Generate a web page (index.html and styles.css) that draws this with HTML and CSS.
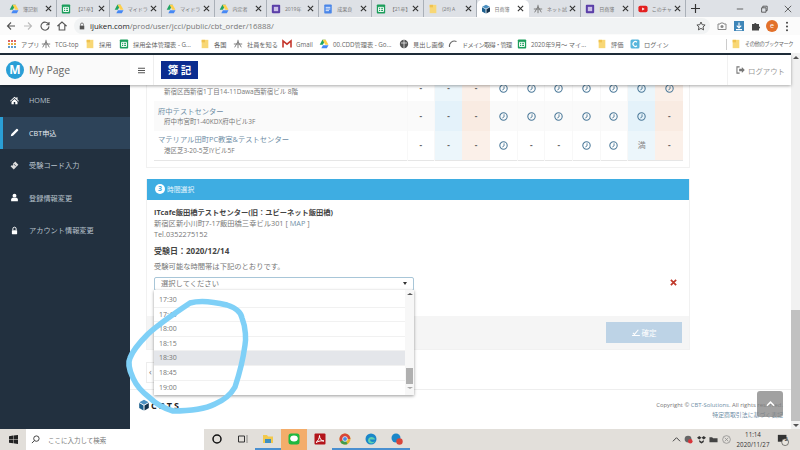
FILE: index.html
```html
<!DOCTYPE html>
<html lang="ja">
<head>
<meta charset="utf-8">
<title>My Page</title>
<link rel="stylesheet" href="styles.css">
</head>
<body>
<svg class="defs" xmlns="http://www.w3.org/2000/svg">
  <symbol id="drive" viewBox="0 0 12 12"><path d="M4 1h4L4.6 7H.8z" fill="#1fa463"/><path d="M8 1l3.4 6H7.6L4.2 1z" fill="#ffd04b"/><path d="M2.8 11l1.9-3.6h6.7L9.4 11z" fill="#4688f4"/></symbol>
  <symbol id="sheet" viewBox="0 0 12 12"><rect x="1" y="0.5" width="10" height="11" rx="1" fill="#1c9e5c"/><path d="M3 4h6v5H3zM5.6 4v5M3 6.4h6" fill="none" stroke="#fff" stroke-width="1.1"/></symbol>
  <symbol id="forms" viewBox="0 0 12 12"><rect x="1" y="1" width="10" height="10" rx="1" fill="#5b3fa8"/><rect x="3.4" y="3.4" width="5.2" height="5.2" fill="#cbbfe8"/></symbol>
  <symbol id="docs" viewBox="0 0 12 12"><rect x="1.5" y="0.5" width="9" height="11" rx="1" fill="#4a86e8"/><path d="M3.2 4h5.6M3.2 6h5.6M3.2 8h4" stroke="#fff" stroke-width="1"/></symbol>
  <symbol id="folder" viewBox="0 0 12 12"><path d="M2 1h8v10H2z" fill="#f8d775"/><path d="M2 1h4v3H2z" fill="#f0c24f"/></symbol>
  <symbol id="cube" viewBox="0 0 12 12"><path d="M6 .8l4.6 2.5L6 5.8 1.4 3.3z" fill="#4b8fc0"/><path d="M1.2 4l4.3 2.4v5L1.2 9z" fill="#1c5f8e"/><path d="M10.8 4L6.5 6.4v5L10.8 9z" fill="#13324d"/></symbol>
  <symbol id="net" viewBox="0 0 12 12"><path d="M2 10L6 3l4 7M1 6h10M6 1v10" fill="none" stroke="#777" stroke-width="1.1"/></symbol>
  <symbol id="yt" viewBox="0 0 12 12"><rect x="0.5" y="2" width="11" height="8" rx="2.2" fill="#e32020"/><path d="M5 4.2L8 6 5 7.8z" fill="#fff"/></symbol>
  <symbol id="clock" viewBox="0 0 10 10"><circle cx="5" cy="5" r="4.1" fill="none" stroke="#4d7a9a" stroke-width="1.2"/><path d="M5.6 2.6v2.9L3.7 6.6" fill="none" stroke="#4d7a9a" stroke-width="1"/></symbol>
  <symbol id="close" viewBox="0 0 8 8"><path d="M1 1l6 6M7 1L1 7" stroke="#333" stroke-width="1.3" fill="none"/></symbol>
</svg>

<div class="tabs">
  <div class="tab"><svg class="fav"><use href="#drive"/></svg><span class="tab-t">簿記新</span><svg class="tab-x"><use href="#close"/></svg></div>
  <div class="tab"><svg class="fav"><use href="#sheet"/></svg><span class="tab-t">【21卒】</span><svg class="tab-x"><use href="#close"/></svg></div>
  <div class="tab"><svg class="fav"><use href="#drive"/></svg><span class="tab-t">マイドラ</span><svg class="tab-x"><use href="#close"/></svg></div>
  <div class="tab"><svg class="fav"><use href="#drive"/></svg><span class="tab-t">マイドラ</span><svg class="tab-x"><use href="#close"/></svg></div>
  <div class="tab"><svg class="fav"><use href="#drive"/></svg><span class="tab-t">内定者</span><svg class="tab-x"><use href="#close"/></svg></div>
  <div class="tab"><svg class="fav"><use href="#forms"/></svg><span class="tab-t">2019年</span><svg class="tab-x"><use href="#close"/></svg></div>
  <div class="tab"><svg class="fav"><use href="#docs"/></svg><span class="tab-t">成果良</span><svg class="tab-x"><use href="#close"/></svg></div>
  <div class="tab"><svg class="fav"><use href="#sheet"/></svg><span class="tab-t">【21卒】</span><svg class="tab-x"><use href="#close"/></svg></div>
  <div class="tab"><svg class="fav"><use href="#folder"/></svg><span class="tab-t">(26) A</span><svg class="tab-x"><use href="#close"/></svg></div>
  <div class="tab tab-active"><svg class="fav"><use href="#cube"/></svg><span class="tab-t">日商簿</span><svg class="tab-x"><use href="#close"/></svg></div>
  <div class="tab"><svg class="fav"><use href="#net"/></svg><span class="tab-t">ネット試</span><svg class="tab-x"><use href="#close"/></svg></div>
  <div class="tab"><svg class="fav"><use href="#forms"/></svg><span class="tab-t">日商簿</span><svg class="tab-x"><use href="#close"/></svg></div>
  <div class="tab"><svg class="fav"><use href="#yt"/></svg><span class="tab-t">このチャ</span><svg class="tab-x"><use href="#close"/></svg></div>
  <svg class="tab-plus" viewBox="0 0 10 10"><path d="M5 0v10M0 5h10" stroke="#333" stroke-width="1.3"/></svg>
  <div class="win">
    <svg class="win-i" viewBox="0 0 10 10"><path d="M1 5h8" stroke="#444"/></svg>
    <svg class="win-i" viewBox="0 0 10 10"><path d="M2 3.5h5.5V9H2zM3.5 3.5V1.5H9V7H7.5" fill="none" stroke="#444"/></svg>
    <svg class="win-i" viewBox="0 0 10 10"><path d="M1 1l8 8M9 1L1 9" stroke="#444"/></svg>
  </div>
</div>

<div class="toolbar">
  <svg class="tb-i" viewBox="0 0 10 10"><path d="M9 5H1.500M5 1.500L1.500 5 5 8.500" fill="none" stroke="#555" stroke-width="1.1"/></svg>
  <svg class="tb-i" viewBox="0 0 10 10"><path d="M1 5h7.500M5 1.500L8.500 5 5 8.500" fill="none" stroke="#bbb" stroke-width="1.1"/></svg>
  <svg class="tb-i" viewBox="0 0 10 10"><path d="M8.600 3.400A4 4 0 1 0 9 5.400M9 1v2.800H6.200" fill="none" stroke="#555" stroke-width="1.1"/></svg>
  <svg class="tb-i" viewBox="0 0 10 10"><path d="M5 1L1 4.600h1.200V9h5.600V4.600H9z" fill="none" stroke="#555" stroke-width="1.1"/></svg>
  <div class="omni">
    <svg class="lock" viewBox="0 0 8 10"><path d="M2 4.500V3a2 2 0 0 1 4 0v1.500" fill="none" stroke="#555"/><rect x="1" y="4.500" width="6" height="5" fill="#555"/></svg>
    <span class="url"><b>ijuken.com</b>/prod/user/jcci/public/cbt_order/16888/</span>
    <svg class="star" viewBox="0 0 10 10"><path d="M5 1l1.200 2.700 2.900.3L7 6l.6 2.900L5 7.400 2.400 8.900 3 6 .9 4l2.900-.3z" fill="none" stroke="#555"/></svg>
  </div>
  <svg class="ext" viewBox="0 0 10 10"><path d="M1 3h2l.7-1h2.600L7 3h2v5.500H1z" fill="none" stroke="#888"/><circle cx="5" cy="5.600" r="1.500" fill="#888"/></svg>
  <svg class="ext" viewBox="0 0 10 10"><rect width="10" height="10" fill="#3f86b8"/><path d="M5 1.500v5M2.800 4.600L5 7l2.200-2.400M2 8.600h6" fill="none" stroke="#fff" stroke-width="1.1"/></svg>
  <svg class="ext" viewBox="0 0 10 10"><path d="M1 3h2.200a1.100 1.100 0 1 1 2.200 0H8v2.400a1.100 1.100 0 1 1 0 2.200V9.500H1z" fill="#444"/></svg>
  <span class="avatar">ｅ</span>
  <svg class="ext ext-kebab" viewBox="0 0 4 12"><circle cx="2" cy="2" r="1.100" fill="#444"/><circle cx="2" cy="6" r="1.100" fill="#444"/><circle cx="2" cy="10" r="1.100" fill="#444"/></svg>
</div>

<div class="bookmarks">
  <span class="bm bm-apps"><svg class="fav" viewBox="0 0 9 9"><path d="M1 1h1.600v1.600H1zM3.700 1h1.600v1.600H3.700zM6.400 1H8v1.600H6.400z" fill="#d9534f"/><path d="M1 3.700h1.600v1.600H1zM3.700 3.700h1.600v1.600H3.700zM6.400 3.700H8v1.600H6.400z" fill="#e0a030"/><path d="M1 6.400h1.600V8H1zM3.700 6.400h1.600V8H3.700zM6.400 6.400H8V8H6.400z" fill="#4a90c8"/></svg>アプリ</span>
  <span class="bm bm-tcg"><svg class="fav"><use href="#net"/></svg>TCG-top</span>
  <span class="bm bm-hire"><svg class="fav"><use href="#folder"/></svg>採用</span>
  <span class="bm bm-hire2"><svg class="fav"><use href="#sheet"/></svg>採用全体管理表 - G...</span>
  <span class="bm bm-country"><svg class="fav"><use href="#folder"/></svg>各国</span>
  <span class="bm bm-staff"><svg class="fav"><use href="#net"/></svg>社員を知る</span>
  <span class="bm bm-gmail"><svg class="fav" viewBox="0 0 10 10"><path d="M1 8.500V2l4 3.200L9 2v6.500" fill="none" stroke="#c5362c" stroke-width="1.600"/></svg>Gmail</span>
  <span class="bm bm-cdd"><svg class="fav"><use href="#drive"/></svg>00.CDD管理表 - Go...</span>
  <span class="bm bm-img"><svg class="fav" viewBox="0 0 10 10"><circle cx="5" cy="5" r="4.200" fill="#555"/><path d="M2 4h6M5 1v8" stroke="#fff" stroke-width=".7"/></svg>見出し画像</span>
  <span class="bm bm-domain"><svg class="fav" viewBox="0 0 10 10"><path d="M1.500 8A5 5 0 0 1 8.500 2.500" fill="none" stroke="#666" stroke-width="1.100"/></svg>ドメイン取得・管理</span>
  <span class="bm bm-sep"><svg class="fav"><use href="#sheet"/></svg>2020年9月～ マイ...</span>
  <span class="bm bm-eval"><svg class="fav"><use href="#folder"/></svg>評価</span>
  <span class="bm bm-login"><svg class="fav" viewBox="0 0 10 10"><rect x=".5" y=".5" width="9" height="9" rx="1.500" fill="#58b6dc"/><path d="M7 3.200A2.400 2.400 0 1 0 7 6.800" fill="none" stroke="#fff" stroke-width="1.200"/></svg>ログイン</span>
  <span class="bm-divider"></span>
  <span class="bm bm-other"><svg class="fav"><use href="#folder"/></svg>その他のブックマーク</span>
</div>

<div class="viewport">
  <div class="page">
    <header class="topbar">
      <div class="brand">
        <span class="brand-mark">M</span>
        <span class="brand-name">My Page</span>
      </div>
      <div class="toggle">
        <svg class="toggle-i" viewBox="0 0 8 7"><path d="M0 1h8M0 3.500h8M0 6h8" stroke="#555" stroke-width="1.200"/></svg>
      </div>
      <div class="logo-wrap"><span class="logo">簿 記</span></div>
      <a class="logout">
        <svg class="logout-i" viewBox="0 0 10 9"><path d="M4 1H1v7h3" fill="none" stroke="#777" stroke-width="1.200"/><path d="M3.500 3.200h3V1l3.300 3.500L6.500 8V5.800h-3z" fill="#777"/></svg>ログアウト
      </a>
    </header>
    <div class="body">
      <nav class="sidebar">
        <a class="nav-item">
          <svg class="nav-i" viewBox="0 0 12 12"><path d="M6 1L0 6.500l.8.800L6 2.700l5.200 4.600.8-.8-2-1.800V1.500H8.500v1.600zM2 7.500V11h3V8h2v3h3V7.500L6 4z" fill="#fff"/></svg>
          <span>HOME</span>
        </a>
        <a class="nav-item nav-active">
          <svg class="nav-i" viewBox="0 0 12 12"><path d="M1 11l.8-3L8.500 1.300a1 1 0 0 1 1.400 0l.8.800a1 1 0 0 1 0 1.400L4 10.200z" fill="#fff"/></svg>
          <span>CBT申込</span>
        </a>
        <a class="nav-item">
          <svg class="nav-i" viewBox="0 0 12 12"><path d="M7 .8l4.200 4.200L5 11.200.8 7l1.200-1.200a1.200 1.200 0 0 0 1.700-1.700z" fill="#ddd"/><path d="M5 4l3 3" stroke="#22303f"/></svg>
          <span>受験コード入力</span>
        </a>
        <a class="nav-item">
          <svg class="nav-i" viewBox="0 0 12 12"><circle cx="6" cy="3.500" r="2.600" fill="#fff"/><path d="M1.500 11V8.500C1.500 7 3 6.300 4 6.300h4c1 0 2.500.7 2.500 2.200V11z" fill="#fff"/></svg>
          <span>登録情報変更</span>
        </a>
        <a class="nav-item">
          <svg class="nav-i" viewBox="0 0 12 12"><path d="M3.800 5.500V3.800a2.200 2.200 0 0 1 4.400 0v1.700" fill="none" stroke="#fff" stroke-width="1.300"/><rect x="2.500" y="5.500" width="7" height="5.500" rx=".6" fill="#fff"/></svg>
          <span>アカウント情報変更</span>
        </a>
      </nav>
      <main class="main">
        <div class="scroll">
          <section class="card">
            <table class="venues">
              <tr class="first">
                <td class="venue"><div class="addr">新宿区西新宿1丁目14-11Dawa西新宿ビル 8階</div></td>
                <td>-</td><td class="c-blue">-</td><td class="c-orange">-</td>
                <td><svg class="ck"><use href="#clock"/></svg></td><td><svg class="ck"><use href="#clock"/></svg></td><td><svg class="ck"><use href="#clock"/></svg></td><td><svg class="ck"><use href="#clock"/></svg></td><td><svg class="ck"><use href="#clock"/></svg></td>
                <td class="c-blue"><svg class="ck"><use href="#clock"/></svg></td><td class="c-orange"><svg class="ck"><use href="#clock"/></svg></td>
              </tr>
              <tr class="alt">
                <td class="venue"><a class="vname">府中テストセンター</a><div class="addr">府中市宮町1-40KDX府中ビル3F</div></td>
                <td>-</td><td class="c-blue">-</td><td class="c-orange">-</td>
                <td><svg class="ck"><use href="#clock"/></svg></td><td><svg class="ck"><use href="#clock"/></svg></td><td><svg class="ck"><use href="#clock"/></svg></td><td><svg class="ck"><use href="#clock"/></svg></td><td><svg class="ck"><use href="#clock"/></svg></td>
                <td class="c-blue"><svg class="ck"><use href="#clock"/></svg></td><td class="c-orange">-</td>
              </tr>
              <tr class="last">
                <td class="venue"><a class="vname">マテリアル田町PC教室&amp;テストセンター</a><div class="addr">港区芝3-20-5芝IYビル5F</div></td>
                <td>-</td><td class="c-blue">-</td><td class="c-orange">-</td>
                <td><svg class="ck"><use href="#clock"/></svg></td><td>-</td><td>-</td><td><svg class="ck"><use href="#clock"/></svg></td><td><svg class="ck"><use href="#clock"/></svg></td>
                <td class="c-blue full">満</td><td class="c-orange">-</td>
              </tr>
            </table>
          </section>

          <section class="panel">
            <h2 class="panel-head"><span class="step">3</span>時間選択</h2>
            <div class="panel-body">
              <p class="p-name">ITcafe飯田橋テストセンター(旧：ユビーネット飯田橋)</p>
              <p class="p-line">新宿区新小川町7-17飯田橋三幸ビル301 [ <a class="map">MAP</a> ]</p>
              <p class="p-line">Tel.0352275152</p>
              <p class="p-date">受験日：2020/12/14</p>
              <p class="p-note">受験可能な時間帯は下記のとおりです。</p>
              <div class="select-row">
                <div class="select">
                  <span>選択してください</span><i class="caret"></i>
                  <div class="dropdown">
                    <ul class="options">
                      <li>17:30</li><li>17:45</li><li>18:00</li><li>18:15</li><li class="hover">18:30</li><li>18:45</li><li>19:00</li>
                    </ul>
                    <div class="dd-scroll"><i class="up"></i><b></b><i class="down"></i></div>
                  </div>
                </div>
                <svg class="remove" viewBox="0 0 8 8"><path d="M1 1l6 6M7 1L1 7" stroke="#c0392b" stroke-width="2"/></svg>
              </div>
            </div>
            <div class="panel-foot">
              <a class="confirm"><svg class="confirm-i" viewBox="0 0 10 9"><path d="M1 5l2 2 5-6M0 8.500h10" fill="none" stroke="#fff" stroke-width="1.300"/></svg>確定</a>
            </div>
          </section>

          <div class="pager"><a class="prev">‹</a></div>
        </div>

        <footer class="foot">
          <div class="foot-logo">
            <svg class="foot-cube"><use href="#cube"/></svg><span>CBTS</span>
          </div>
          <div class="foot-text">
            <div>Copyright © <a class="foot-link">CBT-Solutions</a>. All rights reserved.</div>
            <div><a class="foot-link">特定商取引法に基づく表記</a></div>
          </div>
          <a class="to-top"><svg class="to-top-i" viewBox="0 0 10 6"><path d="M1 5l4-4 4 4" fill="none" stroke="#fff" stroke-width="1.800"/></svg></a>
        </footer>
      </main>
    </div>
  </div>
  <div class="scrollbar"><i class="up"></i><b></b><i class="down"></i></div>
</div>

<div class="taskbar">
  <div class="start"><svg class="start-i" viewBox="0 0 10 10"><path d="M0 1.300l4.500-.7v4H0zM5 .5L10 0v4.600H5zM0 5.200h4.500v4L0 8.600zM5 5.200h5V10l-5-.7z" fill="#222"/></svg></div>
  <div class="search"><svg class="search-i" viewBox="0 0 10 10"><circle cx="6" cy="4" r="3" fill="none" stroke="#333"/><path d="M3.800 6.200L1 9" stroke="#333"/></svg>ここに入力して検索</div>
  <div class="ti"><svg class="ti-i" viewBox="0 0 12 12"><circle cx="6" cy="6" r="4" fill="none" stroke="#111" stroke-width="1.500"/></svg></div>
  <div class="ti"><svg class="ti-i" viewBox="0 0 12 12"><path d="M1.500 3h6v6h-6zM9.500 3h1M9.500 5h1M9.500 7h1M9.500 9h1" fill="none" stroke="#333"/></svg></div>
  <div class="ti ti-run"><svg class="ti-i" viewBox="0 0 12 12"><path d="M1 2h4l1 1.500h5V10H1z" fill="#f2c94c"/><path d="M3 6h6v4H3z" fill="#3f8fc0"/></svg></div>
  <div class="ti ti-line"><svg class="ti-i" viewBox="0 0 12 12"><rect x=".5" y=".5" width="11" height="11" rx="2.500" fill="#1fb83f"/><ellipse cx="6" cy="5.500" rx="3.800" ry="3" fill="#fff"/></svg></div>
  <div class="ti"><svg class="ti-i" viewBox="0 0 12 12"><rect x=".5" y=".5" width="11" height="11" rx="1" fill="#b3151a"/><path d="M2 9.500C4 8 5.500 5 5.500 2.500 5.500 6 7.500 8 10 8 7.500 7.500 4.500 8 2 9.500z" fill="none" stroke="#fff"/></svg></div>
  <div class="ti ti-run"><svg class="ti-i" viewBox="0 0 12 12"><circle cx="6" cy="6" r="5.500" fill="#e5b52d"/><path d="M6 .5A5.500 5.500 0 0 0 1.200 8.700L6 6h5.400A5.500 5.500 0 0 0 6 .5z" fill="#d8453a"/><path d="M1.200 8.700A5.500 5.500 0 0 0 8.500 11L6 6z" fill="#3f9c4c"/><circle cx="6" cy="6" r="2.400" fill="#4a8ae0" stroke="#fff" stroke-width=".7"/></svg></div>
  <div class="ti ti-run"><svg class="ti-i" viewBox="0 0 12 12"><circle cx="6" cy="6" r="5.500" fill="#1b87c9"/><path d="M3 7.500C3 5 5 4 6.500 4S10 5 10 6.500H5C5 9 8 9.500 10 8.500 8 11.500 3 11 3 7.500z" fill="#5fd0b0"/></svg></div>
  <div class="ti ti-run"><svg class="ti-i" viewBox="0 0 12 12"><circle cx="5" cy="5" r="4.500" fill="#1b87c9"/><circle cx="8.500" cy="8.500" r="3.200" fill="#d8453a"/></svg></div>
  <div class="tray">
    <svg class="tr-i" viewBox="0 0 10 10"><path d="M1 7l4-4 4 4" fill="none" stroke="#333"/></svg>
    <svg class="tr-i" viewBox="0 0 10 10"><circle cx="4.500" cy="4.500" r="3.800" fill="#666"/><circle cx="7" cy="7" r="2.500" fill="#d8353a"/></svg>
    <svg class="tr-i" viewBox="0 0 10 10"><path d="M2.500 1l2.500 2-2.500 2L0 3zM7.500 1L10 3 7.500 5 5 3zM2.500 5.500L5 7.500l2.500-2v2.200L5 9.500 2.500 7.700z" fill="#333"/></svg>
    <svg class="tr-i" viewBox="0 0 10 10"><path d="M.5 2.500h3l1 1h5V8H.5z" fill="#444"/></svg>
    <svg class="tr-i" viewBox="0 0 10 10"><circle cx="5" cy="5" r="4.300" fill="none" stroke="#888" stroke-width=".8"/><path d="M3 3l4 4M7 3L3 7" stroke="#888" stroke-width=".8"/></svg>
    <div class="clock"><div>11:14</div><div>2020/11/27</div></div>
    <svg class="tr-note" viewBox="0 0 14 14"><path d="M1 1h10v8H1z" fill="#333"/><circle cx="9.500" cy="9.500" r="4" fill="#e8e5df" stroke="#333" stroke-width=".7"/></svg>
    <span class="tr-badge">2</span>
  </div>
</div>

<svg class="marker" viewBox="0 0 800 450">
  <path d="M190 303C200 300 215 302 227 305C236 308 241 312 242 318C246 328 246 340 245 345C243 360 239 375 235 387C230 396 222 401 215 404C205 409 190 411 173 411C163 408 155 403 150 398C142 392 136 385 133 378C129 370 128 362 130 358C133 350 140 342 148 334C160 323 175 313 190 303Z" fill="none" stroke="#7fd0f7" stroke-width="5.500" stroke-linejoin="round"/>
</svg>
</body>
</html>
```
FILE: styles.css
```css
* { box-sizing: border-box; }
html, body { margin: 0; padding: 0; }
body {
  position: relative;
  width: 800px;
  height: 450px;
  overflow: hidden;
  display: flex;
  flex-direction: column;
  font-family: "Open Sans", "Noto Sans CJK JP", sans-serif;
  font-size: 7.3px;
  color: #666;
  background: #fff;
}
.defs { display: none; }
p { margin: 0; }
ul { margin: 0; padding: 0; list-style: none; }
i { display: block; }
.fav { width: 10px; height: 10px; flex: none; }

/* browser tabs */
.tabs {
  height: 17px;
  flex: none;
  display: flex;
  align-items: center;
  padding-left: 5px;
  background: #dee1e6;
}
.tab {
  flex: 0 0 52.4px;
  min-width: 0;
  height: 17px;
  display: flex;
  align-items: center;
  gap: 4px;
  padding: 0 4px 0 4px;
  border-right: 1px solid #aab0b8;
}
.tab-active { background: #fff; border-radius: 5px 5px 0 0; border-right-color: transparent; }
.tab-t { flex: 1; min-width: 0; white-space: nowrap; font-size: 5px; color: #777; }
.tab-x { width: 7px; height: 7px; flex: none; }
.tab-plus { width: 9px; height: 9px; margin-left: 5px; flex: none; }
.win { margin-left: auto; display: flex; gap: 16px; padding-right: 8px; }
.win-i { width: 8px; height: 8px; }

/* toolbar */
.toolbar {
  height: 18px;
  flex: none;
  display: flex;
  align-items: center;
  padding-left: 6px;
  gap: 7px;
  background: #fbfbfb;
}
.tb-i { width: 10px; height: 10px; flex: none; }
.omni {
  width: 636px;
  height: 16px;
  display: flex;
  align-items: center;
  padding: 0 4px 0 5px;
  border-radius: 8px;
  background: #f1f3f4;
}
.lock { width: 6px; height: 8px; margin-right: 5px; flex: none; }
.url { font-size: 7.8px; color: #777; white-space: nowrap; }
.url b { font-weight: 400; color: #222; }
.star { width: 10px; height: 10px; margin-left: auto; }
.ext { width: 10px; height: 10px; flex: none; }
.ext-kebab { width: 4px; height: 11px; }
.avatar {
  width: 12px; height: 12px; flex: none;
  margin-left: -2px; border-radius: 50%;
  background: #e2702a; color: #fff;
  font-size: 6px; line-height: 12px; text-align: center;
}

/* bookmarks */
.bookmarks {
  height: 18px;
  flex: none;
  display: flex;
  align-items: center;
  padding-left: 7px;
  background: #fff;
  font-size: 6.2px;
  color: #666;
  white-space: nowrap;
}
.bm { display: flex; align-items: center; gap: 4px; flex: none; }
.bm-apps { width: 34px; }
.bm-tcg { width: 44px; }
.bm-hire { width: 34px; }
.bm-hire2 { width: 81px; }
.bm-country { width: 33px; }
.bm-staff { width: 49px; }
.bm-gmail { width: 37px; }
.bm-cdd { width: 80px; }
.bm-img { width: 49px; }
.bm-domain { width: 69px; letter-spacing: -.7px; }
.bm-sep { width: 80px; }
.bm-eval { width: 33px; }
.bm-login { width: 96px; }
.bm-other { font-size: 5.3px; letter-spacing: -.5px; }
.bm-divider { width: 1px; height: 11px; margin-right: 4px; background: #ccc; flex: none; }

/* viewport */
.viewport { flex: none; height: 376px; display: flex; }
.page { flex: 1; min-width: 0; display: flex; flex-direction: column; border-top: 2px solid #1f2d3a; }
.scrollbar {
  width: 9px;
  flex: none;
  display: flex;
  flex-direction: column;
  align-items: center;
  background: #f1f1f1;
}
.scrollbar b { width: 9px; height: 111px; margin-top: 251px; background: #c1c1c1; flex: none; }
.up, .down { width: 0; height: 0; flex: none; border-left: 3px solid transparent; border-right: 3px solid transparent; }
.up { border-bottom: 3px solid #555; }
.down { border-top: 3px solid #555; }
.scrollbar .up, .scrollbar .down { margin-top: 3px; }

/* topbar */
.topbar {
  position: relative;
  z-index: 3;
  height: 30px;
  flex: none;
  display: flex;
  align-items: center;
  background: #fff;
  box-shadow: 0 1px 3px rgba(0, 0, 0, .35);
}
.brand { width: 130px; height: 30px; display: flex; align-items: center; gap: 5px; padding-left: 6px; background: #fafafa; }
.brand-mark {
  width: 18px; height: 18px; border-radius: 50%;
  background: #2a9fd6; color: #fff;
  font-size: 12px; font-weight: 700; line-height: 18px; text-align: center;
}
.brand-name { font-size: 10.5px; color: #666; }
.toggle { width: 24px; height: 30px; display: flex; align-items: center; justify-content: center; border-right: 1px solid #eee; }
.toggle-i { width: 7px; height: 7px; }
.logo-wrap { padding-left: 7px; }
.logo {
  display: block;
  width: 37px; height: 18px;
  background: #0b2c8f;
  color: #fff;
  font-size: 10.5px; font-weight: 700; line-height: 18px; text-align: center;
}
.logout {
  margin-left: auto;
  width: 64px;
  height: 30px;
  padding-left: 8px;
  display: flex; align-items: center; gap: 3px;
  border-left: 1px solid #f1f1f1;
  font-size: 7.4px; color: #999;
  white-space: nowrap;
}
.logout-i { width: 9px; height: 8px; flex: none; }

/* sidebar */
.body { flex: 1; min-height: 0; display: flex; }
.sidebar { width: 130px; flex: none; background: #22303f; }
.nav-item {
  height: 32.5px;
  display: flex; align-items: center;
  padding-left: 10px;
  gap: 10px;
  font-size: 7.2px;
  color: #b8c2cc;
}
.nav-item:first-child { margin-top: -1px; }
.nav-active {
  background: #2d4359;
  color: #e8edf2;
  border-left: 3px solid #2a9fd6;
  padding-left: 7px;
}
.nav-i { width: 9px; height: 9px; flex: none; }

/* main */
.main { position: relative; flex: 1; min-width: 0; display: flex; flex-direction: column; background: #fff; overflow: hidden; }
.scroll { position: relative; z-index: 1; flex: 1; min-height: 0; padding: 0 101px 0 16px; }
.card { margin-top: -14px; padding: 0 7px 6px; background: #fff; border: 1px solid #f1f1f1; }
.venues {
  width: 529px;
  table-layout: fixed;
  border-collapse: collapse;
  margin-top: -1px;
  border-bottom: 1px solid #e6e6e6;
}
.venues td {
  width: 27.6px;
  height: 30px;
  padding: 0;
  text-align: center;
  vertical-align: middle;
  font-size: 8px;
  font-weight: 700;
  line-height: 1;
  color: #666;
  border-right: 1px solid #f8f8f8;
}
.venues .first td { padding-top: 4px; }
.venues .venue, .venues .first .venue { width: 253px; font-weight: 400; text-align: left; vertical-align: bottom; padding: 0 0 5px 4px; }
.venues .last td { height: 29px; }
.alt td { background: #fafafa; }
.venues .c-blue { background: #ecf6fb; border-right: 0; }
.venues .c-orange { background: #fbf0e9; border-right: 0; }
.alt td.c-blue { background: #e4f2fa; }
.alt td.c-orange { background: #f9ebe2; }
.vname { display: block; font-size: 7.3px; line-height: 10px; color: #6f8ea6; white-space: nowrap; }
.addr { margin-top: 1.5px; padding-left: 6px; font-size: 6.5px; line-height: 9px; color: #777; white-space: nowrap; }
.ck { width: 9px; height: 9px; display: block; margin: 0 auto; }
.venues .full { color: #888; font-weight: 400; }

/* panel */
.panel { margin-top: 11px; border: 1px solid #f1f1f1; border-top: 0; background: #fff; }
.panel-head {
  height: 21px;
  margin: 0;
  display: flex; align-items: center;
  gap: 2px;
  padding-left: 8px;
  background: #3eade2;
  color: #e8f5fc;
  font-size: 6.8px;
  font-weight: 400;
}
.step {
  width: 10px; height: 10px; border-radius: 50%;
  background: #fff; color: #3eade2;
  font-size: 7px; font-weight: 700; line-height: 10px; text-align: center;
}
.panel-body { height: 116px; padding: 7px 7px 0; line-height: 11px; color: #666; }
.p-name { font-weight: 700; color: #444; font-size: 7.25px; }
.p-line { color: #777; }
.map { color: #6f8ea6; }
.p-date { margin-top: 5px; font-size: 8px; font-weight: 700; color: #444; }
.p-note { margin-top: 5px; color: #777; }
.select-row { margin-top: 5px; display: flex; align-items: flex-start; justify-content: space-between; }
.select {
  position: relative;
  width: 260px; height: 14px;
  display: flex; align-items: center; justify-content: space-between;
  padding: 0 6px;
  border: 1px solid #a8c6d8;
  border-radius: 2px;
  color: #777;
}
.caret { width: 0; height: 0; border-left: 2.5px solid transparent; border-right: 2.5px solid transparent; border-top: 3px solid #333; }
.dropdown {
  position: absolute;
  z-index: 2;
  left: -1px; top: 12px;
  width: 260px; height: 105px;
  display: flex;
  background: #fff;
  box-shadow: 0 1px 3px rgba(0, 0, 0, .4);
}
.options { flex: 1; padding-top: 3.5px; }
.options li {
  height: 14.6px;
  padding-left: 5px;
  line-height: 14px;
  font-size: 7px;
  color: #777;
  border-bottom: 1px solid #f1f1f1;
}
.options li:last-child { border-bottom: 0; }
.options .hover { background: #e4e6ea; }
.dd-scroll { width: 9px; display: flex; flex-direction: column; align-items: center; background: #f7f7f7; }
.dd-scroll .up { margin-top: 3px; border-bottom-width: 2.5px; }
.dd-scroll b { width: 7px; height: 16px; margin-top: 73px; background: #b0b0b0; flex: none; }
.dd-scroll .down { margin-top: 3px; border-top-width: 2.5px; border-top-color: #aaa; }
.remove { width: 7px; height: 7px; margin: 2px 5.5px 0 0; flex: none; }
.panel-foot { height: 33px; display: flex; align-items: center; justify-content: flex-end; padding-right: 7px; background: #f5f5f5; }
.confirm {
  width: 76px; height: 21px;
  display: flex; align-items: center; justify-content: center;
  gap: 2px;
  background: #bdd3e6; color: #fff;
  font-size: 7.5px;
}
.confirm-i { width: 8px; height: 7px; }

/* pager */
.pager { margin-top: 12px; }
.prev {
  display: block;
  width: 30px; height: 21px;
  padding-left: 2px;
  border: 1px solid #ededed;
  font-size: 9px; line-height: 18px;
  color: #777;
}

/* footer */
.foot {
  position: relative;
  height: 40px;
  flex: none;
  display: flex;
  justify-content: space-between;
  padding: 9px 8px 0;
  border-top: 1px solid #eee;
  background: #fff;
}
.foot-logo { display: flex; align-items: center; height: 12px; gap: 1px; font-size: 9px; font-weight: 700; letter-spacing: 2px; color: #222; }
.foot-cube { width: 12px; height: 12px; }
.foot-text { margin-top: 1px; font-size: 5.9px; line-height: 10px; text-align: right; color: #777; }
.foot-link { color: #6f8ea6; }
.to-top {
  position: absolute;
  right: 8px; top: 1px;
  width: 26px; height: 26px;
  display: flex; align-items: center; justify-content: center;
  border-radius: 3px;
  background: rgba(130, 130, 130, .75);
}
.to-top-i { width: 9px; height: 6px; }

/* taskbar */
.taskbar {
  height: 21px;
  flex: none;
  display: flex;
  align-items: center;
  background: #e2dfda;
}
.start { width: 26px; display: flex; justify-content: center; }
.start-i { width: 9px; height: 9px; }
.search {
  width: 178px; height: 21px;
  display: flex; align-items: center; gap: 8px;
  padding-left: 5px;
  background: #fff;
  font-size: 6.5px;
  color: #777;
}
.search-i { width: 9px; height: 9px; flex: none; }
.ti { width: 25.7px; height: 21px; display: flex; align-items: center; justify-content: center; border-bottom: 2px solid transparent; }
.ti-i { width: 12px; height: 12px; }
.ti-run { border-bottom-color: #4a90d0; }
.ti-line { background: #f3ad6b; }
.tray { margin-left: auto; position: relative; display: flex; align-items: center; gap: 3.5px; padding-right: 11px; }
.tr-i { width: 9px; height: 9px; flex: none; }
.clock { width: 36px; margin: 0 2.5px 0 1px; font-size: 6.2px; line-height: 9.5px; text-align: center; color: #333; white-space: nowrap; }
.tr-note { width: 12px; height: 12px; flex: none; }
.tr-badge { position: absolute; right: 12px; top: 6px; font-size: 6px; line-height: 7px; color: #222; }

/* hand-drawn marker over the screenshot */
.marker { position: absolute; left: 0; top: 0; width: 800px; height: 450px; z-index: 9; pointer-events: none; }
```
